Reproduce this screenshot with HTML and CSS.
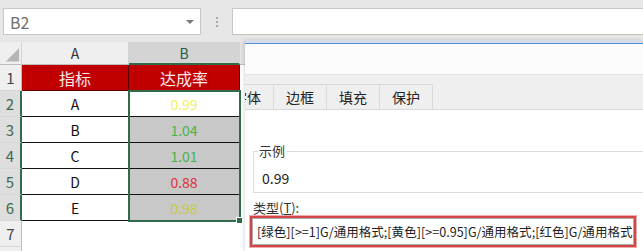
FILE: index.html
```html
<!DOCTYPE html>
<html>
<head>
<meta charset="utf-8">
<link rel="stylesheet" href="styles.css">
</head>
<body>
<div class="page">
  <div class="topbar">
    <div class="namebox"><span class="name">B2</span><span class="arrow"></span></div>
    <div class="dots"><i></i><i></i><i></i></div>
    <div class="formula"></div>
  </div>
  <div class="sheet">
    <div class="hd corner"><svg width="22" height="23" viewBox="0 0 22 23"><polygon points="20,6 20,20 6,20" fill="#b5b5b5"/></svg></div>
    <div class="hd col">A</div>
    <div class="hd col sel">B</div>
    <div class="hd col rest"></div>

    <div class="rh">1</div>
    <div class="c red">指标</div>
    <div class="c red">达成率</div>
    <div class="blank"></div>

    <div class="rh s">2</div>
    <div class="c">A</div>
    <div class="c v yel">0.99</div>
    <div class="blank"></div>

    <div class="rh s">3</div>
    <div class="c">B</div>
    <div class="c v g grn">1.04</div>
    <div class="blank"></div>

    <div class="rh s">4</div>
    <div class="c">C</div>
    <div class="c v g grn">1.01</div>
    <div class="blank"></div>

    <div class="rh s">5</div>
    <div class="c">D</div>
    <div class="c v g rd">0.88</div>
    <div class="blank"></div>

    <div class="rh s">6</div>
    <div class="c">E</div>
    <div class="c v g yel2">0.98</div>
    <div class="blank"></div>

    <div class="rh">7</div>
    <div class="blank"></div>
    <div class="blank"></div>
    <div class="blank"></div>

    <div class="rh">8</div>
    <div class="blank"></div>
    <div class="blank"></div>
    <div class="blank"></div>

    <div class="selection"></div>
    <div class="handle"></div>
  </div>

  <div class="dialog">
    <div class="dlg-edge"></div>
    <div class="dlg-title"></div>
    <div class="tabstrip">
      <div class="tab first">字体</div>
      <div class="tab">边框</div>
      <div class="tab">填充</div>
      <div class="tab">保护</div>
    </div>
    <div class="dlg-body">
      <div class="sample">
        <span class="sample-label">示例</span>
        <div class="sample-value">0.99</div>
      </div>
      <div class="type-label">类型(<u>T</u>):</div>
      <div class="redbox">
        <div class="typein">[绿色][&gt;=1]G/通用格式;[黄色][&gt;=0.95]G/通用格式;[红色]G/通用格式</div>
      </div>
    </div>
  </div>
</div>
</body>
</html>
```

FILE: styles.css
```css
* { box-sizing: border-box; }
html, body { margin: 0; padding: 0; }
body {
  width: 643px;
  height: 251px;
  overflow: hidden;
  background: #fff;
  font-family: "Noto Sans CJK SC", "Noto Sans", sans-serif;
}
.page {
  position: relative;
  width: 643px;
  height: 251px;
  overflow: hidden;
}
.topbar {
  height: 42px;
  background: #e6e6e6;
  display: flex;
  align-items: flex-start;
  padding-top: 8px;
}
.namebox {
  margin-left: 3px;
  width: 198px;
  height: 27px;
  background: #fff;
  border: 1px solid #c8c8c8;
  display: flex;
  align-items: center;
  justify-content: space-between;
  padding: 0 6px 0 6px;
}
.name {
  font-size: 16px;
  color: #707070;
  line-height: 20px;
}
.arrow {
  width: 0;
  height: 0;
  border-left: 4px solid transparent;
  border-right: 4px solid transparent;
  border-top: 4px solid #7a7a7a;
}
.dots {
  width: 31px;
  height: 27px;
  display: flex;
  flex-direction: column;
  align-items: center;
  justify-content: center;
  gap: 2px;
}
.dots i {
  display: block;
  width: 2px;
  height: 2px;
  background: #a9a9a9;
}
.formula {
  flex: 1;
  height: 27px;
  background: #fff;
  border: 1px solid #c8c8c8;
  border-bottom-color: #b9c7b0;
  border-right: none;
}

.sheet {
  position: relative;
  display: grid;
  grid-template-columns: 22px 107px 111px 1fr;
  grid-template-rows: 23px repeat(8, 26px);
}
.hd {
  background: #efefef;
  border-right: 1px solid #d4d4d4;
  border-bottom: 1px solid #bdbdbd;
  font-size: 14px;
  color: #333;
  display: flex;
  align-items: center;
  justify-content: center;
  line-height: 1;
}
.corner { padding: 0; align-items: stretch; justify-content: stretch; }
.corner svg { display: block; }
.col.sel {
  background: #d4d4d4;
  color: #2b5a3e;
  border-bottom: 2px solid #2f6b4a;
}
.col.rest { background: #e2e2e2; border-right: none; }
.rh {
  background: #efefef;
  border-right: 1px solid #bdbdbd;
  border-bottom: 1px solid #d7d7d7;
  font-size: 15px;
  color: #444;
  display: flex;
  align-items: center;
  justify-content: center;
}
.rh.s {
  background: #dedede;
  color: #3b6a4f;
  border-right: 2px solid #2f6b4a;
}
.c {
  border-right: 1px solid #111;
  border-bottom: 1px solid #111;
  font-size: 14px;
  color: #111;
  display: flex;
  align-items: center;
  justify-content: center;
  background: #fff;
}
.c.red {
  background: #c00000;
  color: #fde8e8;
  font-size: 16px;
  border-right-color: #5a0000;
  border-bottom-color: #5a0000;
}
.c.g { background: #c8c8c8; }
.yel { color: #f2f060; }
.grn { color: #49b249; }
.rd { color: #e0303a; }
.yel2 { color: #c9c846; }
.blank { background: #fff; }

.selection {
  position: absolute;
  left: 128px;
  top: 48px;
  width: 113px;
  height: 132px;
  border: 2px solid #2f6b4a;
  pointer-events: none;
}
.handle {
  position: absolute;
  left: 236px;
  top: 175px;
  width: 7px;
  height: 7px;
  background: #2f6b4a;
  border: 1px solid #fff;
}

.dialog {
  position: absolute;
  left: 245px;
  top: 40px;
  right: 0;
  bottom: 0;
  background: #fff;
  overflow: hidden;
  box-shadow: -1px 0 3px rgba(0,0,0,0.15);
}
.dlg-edge {
  height: 4px;
  background: #d9dbe8;
  border-bottom: 1px solid #4a90d9;
}
.dlg-title {
  height: 30px;
  background: #fdfcfd;
}
.tabstrip {
  height: 36px;
  background: #f0eff0;
  border-top: 1px solid #e2e2e2;
  border-bottom: 1px solid #d9d9d9;
  display: flex;
  align-items: flex-end;
  padding-left: 0;
}
.tab {
  width: 54px;
  height: 25px;
  border: 1px solid #d9d9d9;
  border-bottom: none;
  margin-right: -1px;
  font-size: 14px;
  color: #222;
  display: flex;
  align-items: center;
  justify-content: center;
  line-height: 1;
}
.tab.first {
  margin-left: -25px;
}
.dlg-body {
  padding: 41px 0 0 8px;
}
.sample {
  height: 42px;
  border: 1px solid #dcdcdc;
  border-right: none;
  display: flex;
  flex-direction: column;
  align-items: flex-start;
}
.sample-label {
  display: block;
  background: #fff;
  margin: -9px 0 0 4px;
  padding: 0 1px;
  font-size: 13px;
  line-height: 16px;
  color: #333;
}
.sample-value {
  margin: 9px 0 0 8px;
  font-size: 14px;
  line-height: 20px;
  color: #222;
}
.type-label {
  margin-top: 7px;
  font-size: 13px;
  line-height: 16px;
  color: #333;
}
.redbox {
  margin-left: -3px;
  width: 386px;
  height: 31px;
  border: 2px solid #d34646;
  box-shadow: 0 0 0 1px #f1a9a9;
}
.typein {
  height: 100%;
  border: 1px solid #adadad;
  background: #fff;
  padding-left: 4px;
  font-size: 12.5px;
  letter-spacing: 0.04px;
  line-height: 25px;
  color: #222;
  white-space: nowrap;
  overflow: hidden;
}
```
